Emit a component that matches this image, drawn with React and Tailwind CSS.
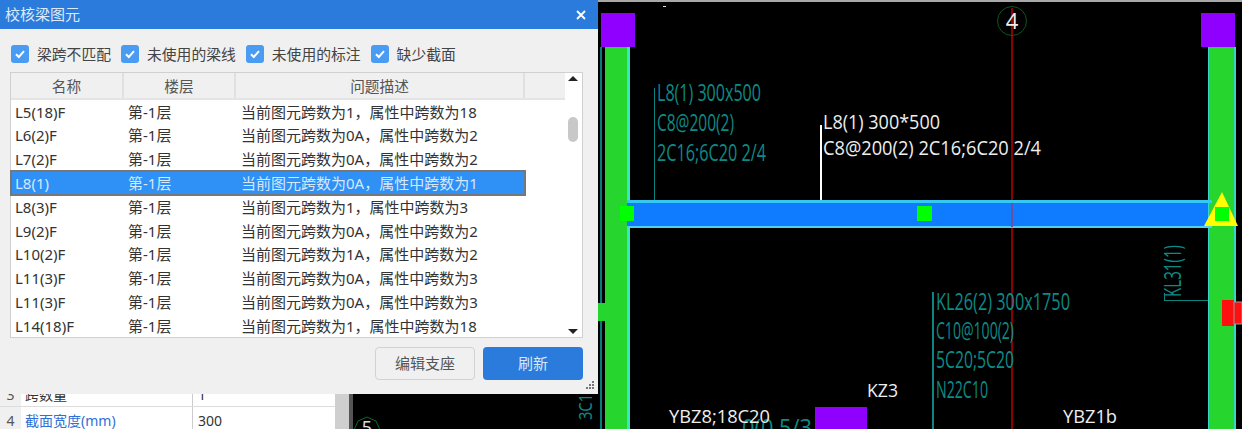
const font = { fontFamily: '"Noto Sans", "Noto Sans CJK SC", sans-serif' };

const checks = ["梁跨不匹配", "未使用的梁线", "未使用的标注", "缺少截面"];

const rows = [
  ["L5(18)F", "当前图元跨数为1，属性中跨数为18"],
  ["L6(2)F", "当前图元跨数为0A，属性中跨数为2"],
  ["L7(2)F", "当前图元跨数为0A，属性中跨数为2"],
  ["L8(1)", "当前图元跨数为0A，属性中跨数为1", true],
  ["L8(3)F", "当前图元跨数为1，属性中跨数为3"],
  ["L9(2)F", "当前图元跨数为0A，属性中跨数为2"],
  ["L10(2)F", "当前图元跨数为1A，属性中跨数为2"],
  ["L11(3)F", "当前图元跨数为0A，属性中跨数为3"],
  ["L11(3)F", "当前图元跨数为0A，属性中跨数为3"],
  ["L14(18)F", "当前图元跨数为1，属性中跨数为18"],
];

const Check = ({ label }) => (
  <label className="flex items-center gap-2 text-[14.8px] text-[#444]">
    <span className="flex h-[18px] w-[18px] items-center justify-center rounded-[3px] bg-[#4a9cf2]">
      <svg width="12" height="12" viewBox="0 0 12 12" fill="none" stroke="white" strokeWidth="2">
        <path d="M2 6.2l2.8 2.8L10 3.2" />
      </svg>
    </span>
    {label}
  </label>
);

const Dialog = () => (
  <div className="flex h-[394px] flex-col bg-[#f0f0f0]">
    <div className="flex h-[29px] items-center justify-between bg-[#2b7bdc] pl-[5px] pr-[12px] text-[15px] text-[#dcebfb]">
      <span>校核梁图元</span>
      <svg width="10" height="10" viewBox="0 0 10 10" stroke="white" strokeWidth="1.8">
        <path d="M1 1l8 8M9 1l-8 8" />
      </svg>
    </div>
    <div className="mt-[16px] flex h-[18px] gap-[10px] pl-[11px]">
      {checks.map((c) => (
        <Check key={c} label={c} />
      ))}
    </div>
    <div className="relative mx-[10px] mt-[9px] h-[266px] w-[573px] border border-[#d0d0d0] bg-white">
      <div className="flex h-[27px] w-[554px] border-b-2 border-[#e4e4e4] bg-[#f0f0f0] text-center text-[14.67px] leading-[26px] text-[#555]">
        <div className="w-[113px] border-r-2 border-[#e0e0e0]">名称</div>
        <div className="w-[112px] border-r-2 border-[#e0e0e0]">楼层</div>
        <div className="w-[289px] border-r-2 border-[#e0e0e0]">问题描述</div>
      </div>
      <div className="text-[15px] text-[#333]">
        {rows.map(([name, desc, selected], i) => (
          <div
            key={i}
            className={
              selected
                ? "flex h-[23.8px] w-[514px] items-center bg-[#2f90f5] text-[#d6e8fb] outline-2 -outline-offset-1 outline-[#777]"
                : "flex h-[23.8px] w-[514px] items-center"
            }
          >
            <span className="w-[113px] pl-[4px]">{name}</span>
            <span className="w-[113px] pl-[4px]">第-1层</span>
            <span className="pl-[4px] whitespace-nowrap">{desc}</span>
          </div>
        ))}
      </div>
      {/* scrollbar */}
      <div className="absolute right-[4px] top-[3px] h-0 w-0 border-x-[5px] border-b-[5px] border-x-transparent border-b-[#222]" />
      <div className="absolute right-[4px] top-[44px] h-[25px] w-[10px] rounded-[5px] bg-[#c8c8c8]" />
      <div className="absolute bottom-[3px] right-[4px] h-0 w-0 border-x-[5px] border-t-[5px] border-x-transparent border-t-[#222]" />
    </div>
    <div className="relative mt-[9px] flex justify-end gap-[8px] pr-[15px] text-[15px]">
      <button className="h-[33px] w-[100px] rounded-[4px] border border-[#d2d2d2] bg-[#f0f0f0] text-[#555]">编辑支座</button>
      <button className="h-[33px] w-[100px] rounded-[4px] bg-[#2b7bdc] text-[#d6e8fb]">刷新</button>
      <svg className="absolute bottom-[-11px] right-[3px]" width="11" height="11" viewBox="0 0 11 11" fill="#777">
        <rect x="8" y="1" width="2" height="2" />
        <rect x="5" y="4" width="2" height="2" />
        <rect x="8" y="4" width="2" height="2" />
        <rect x="2" y="7" width="2" height="2" />
        <rect x="5" y="7" width="2" height="2" />
        <rect x="8" y="7" width="2" height="2" />
      </svg>
    </div>
  </div>
);

const BottomStrip = () => (
  <div className="flex h-[35px] overflow-hidden">
    <div className="flex w-[335px] flex-col justify-end bg-white text-[14px] text-[#333]">
      <div className="flex h-[24px] shrink-0 border-b border-[#ddd]">
        <span className="w-[21px] bg-[#f0f0f0] text-center leading-[24px] text-[#555]">3</span>
        <span className="w-[172px] border-r border-[#ccc] pl-[4px] leading-[24px]">跨数量</span>
        <span className="pl-[5px] leading-[24px]">1</span>
      </div>
      <div className="flex h-[22px] shrink-0">
        <span className="w-[21px] bg-[#f0f0f0] text-center leading-[28px] text-[#555]">4</span>
        <span className="w-[172px] border-r border-[#ccc] pl-[4px] leading-[28px] text-[#2f6fd6]">截面宽度(mm)</span>
        <span className="pl-[5px] leading-[28px]">300</span>
      </div>
    </div>
    <div className="w-[14px] bg-[#cfcfcf]" />
    <div className="w-[4px] bg-[#555]" />
    <div className="relative flex-1 bg-black">
      <svg className="absolute inset-0" width="245" height="35" viewBox="353 394 245 35">
        <polygon points="367,417 376,421 380,430 367,440 354,430 358,421" fill="none" stroke="#0a6b2a" />
        <text x="367" y="434" fill="#ddd" fontSize="18" textAnchor="middle">5</text>
        <text transform="translate(592 420) rotate(-90)" fill="#0a8a80" fontSize="18" textLength="26" lengthAdjust="spacingAndGlyphs">3C1</text>
      </svg>
    </div>
  </div>
);

const Label = ({ x, y, w, size = 23, fill = "#0c8a85", children }) => (
  <text x={x} y={y} fill={fill} fontSize={size} textLength={w} lengthAdjust="spacingAndGlyphs">
    {children}
  </text>
);

const CadView = () => (
  <svg
    className="h-[429px] w-[644px] bg-black"
    viewBox="598 0 644 429"
    style={{ fontFamily: '"Open Sans", sans-serif' }}
  >
    <rect x="598" y="0" width="644" height="2" fill="#a8a8a8" />
    <rect x="663" y="6" width="3" height="1" fill="#ddd" />

    {/* columns */}
    <rect x="600" y="47" width="2" height="382" fill="#0a7b7a" />
    <rect x="605" y="47" width="24" height="382" fill="#26d52e" />
    <rect x="627" y="47" width="3" height="382" fill="#35e8c8" />
    <rect x="598" y="303" width="8" height="18" fill="#26d52e" />
    <rect x="1208" y="47" width="27" height="382" fill="#26d52e" />
    <rect x="1208" y="47" width="1" height="382" fill="#35d8c8" />
    <rect x="1234" y="47" width="2" height="382" fill="#35d8c8" />
    <rect x="601" y="13" width="34" height="34" fill="#8f00ff" />
    <rect x="1201" y="13" width="34" height="34" fill="#8f00ff" />
    <rect x="815" y="407" width="52" height="22" fill="#8f00ff" />

    {/* axis */}
    <rect x="1011" y="8" width="2" height="421" fill="#8b0000" />
    <circle cx="1012" cy="21" r="14.5" fill="none" stroke="#0a5a1a" />
    <text x="1012" y="29" fill="#eee" fontSize="22" textAnchor="middle">4</text>

    {/* beam */}
    <rect x="627" y="203" width="581" height="24" fill="#0f7bff" />
    <rect x="627" y="200" width="585" height="3" fill="#35c8f0" />
    <rect x="627" y="226" width="585" height="2" fill="#50d0f0" />
    <rect x="1011" y="203" width="2" height="24" fill="#6a50a0" />
    <rect x="620" y="206" width="14" height="15" fill="#00ff00" />
    <rect x="917" y="206" width="15" height="15" fill="#00ff00" />
    <polygon points="1222,192 1238,226 1204,226" fill="#ffff00" />
    <rect x="1215" y="207" width="14" height="14" fill="#00ff00" />

    {/* red support */}
    <rect x="1222" y="300" width="12" height="26" fill="#ff1010" />
    <rect x="1234" y="302" width="8" height="22" fill="#ff1010" stroke="#999" />

    {/* teal leaders */}
    <rect x="654" y="88" width="1" height="112" fill="#0c8580" />
    <rect x="932" y="292" width="2" height="137" fill="#0c8580" />
    <rect x="1164" y="300" width="44" height="1" fill="#0c8580" />
    <rect x="1164" y="293" width="1" height="8" fill="#0c8580" />

    <Label x={657} y={101} w={104}>L8(1) 300x500</Label>
    <Label x={657} y={131} w={77}>C8@200(2)</Label>
    <Label x={657} y={161} w={109}>2C16;6C20 2/4</Label>
    <Label x={936} y={310} w={134}>KL26(2) 300x1750</Label>
    <Label x={936} y={339} w={78}>C10@100(2)</Label>
    <Label x={936} y={368} w={78}>5C20;5C20</Label>
    <Label x={936} y={398} w={52}>N22C10</Label>
    <Label x={742} y={436} w={70}>0(0.5/3</Label>
    <text transform="translate(1181 297) rotate(-90)" fill="#0c8a85" fontSize="23" textLength="52" lengthAdjust="spacingAndGlyphs">KL31(1)</text>

    {/* selected beam label */}
    <rect x="820" y="125" width="2" height="75" fill="#fff" />
    <Label x={823} y={129} w={117} size={20} fill="#eee">L8(1) 300*500</Label>
    <Label x={823} y={155} w={218} size={20} fill="#eee">C8@200(2) 2C16;6C20 2/4</Label>
    <Label x={867} y={397} w={31} size={19} fill="#eee">KZ3</Label>
    <Label x={669} y={423} w={101} size={19} fill="#eee">YBZ8;18C20</Label>
    <Label x={1063} y={423} w={54} size={19} fill="#eee">YBZ1b</Label>
  </svg>
);

export default function App() {
  return (
    <div className="flex h-[429px] w-[1242px] overflow-hidden bg-black" style={font}>
      <div className="flex w-[598px] flex-col">
        <Dialog />
        <BottomStrip />
      </div>
      <CadView />
    </div>
  );
}
